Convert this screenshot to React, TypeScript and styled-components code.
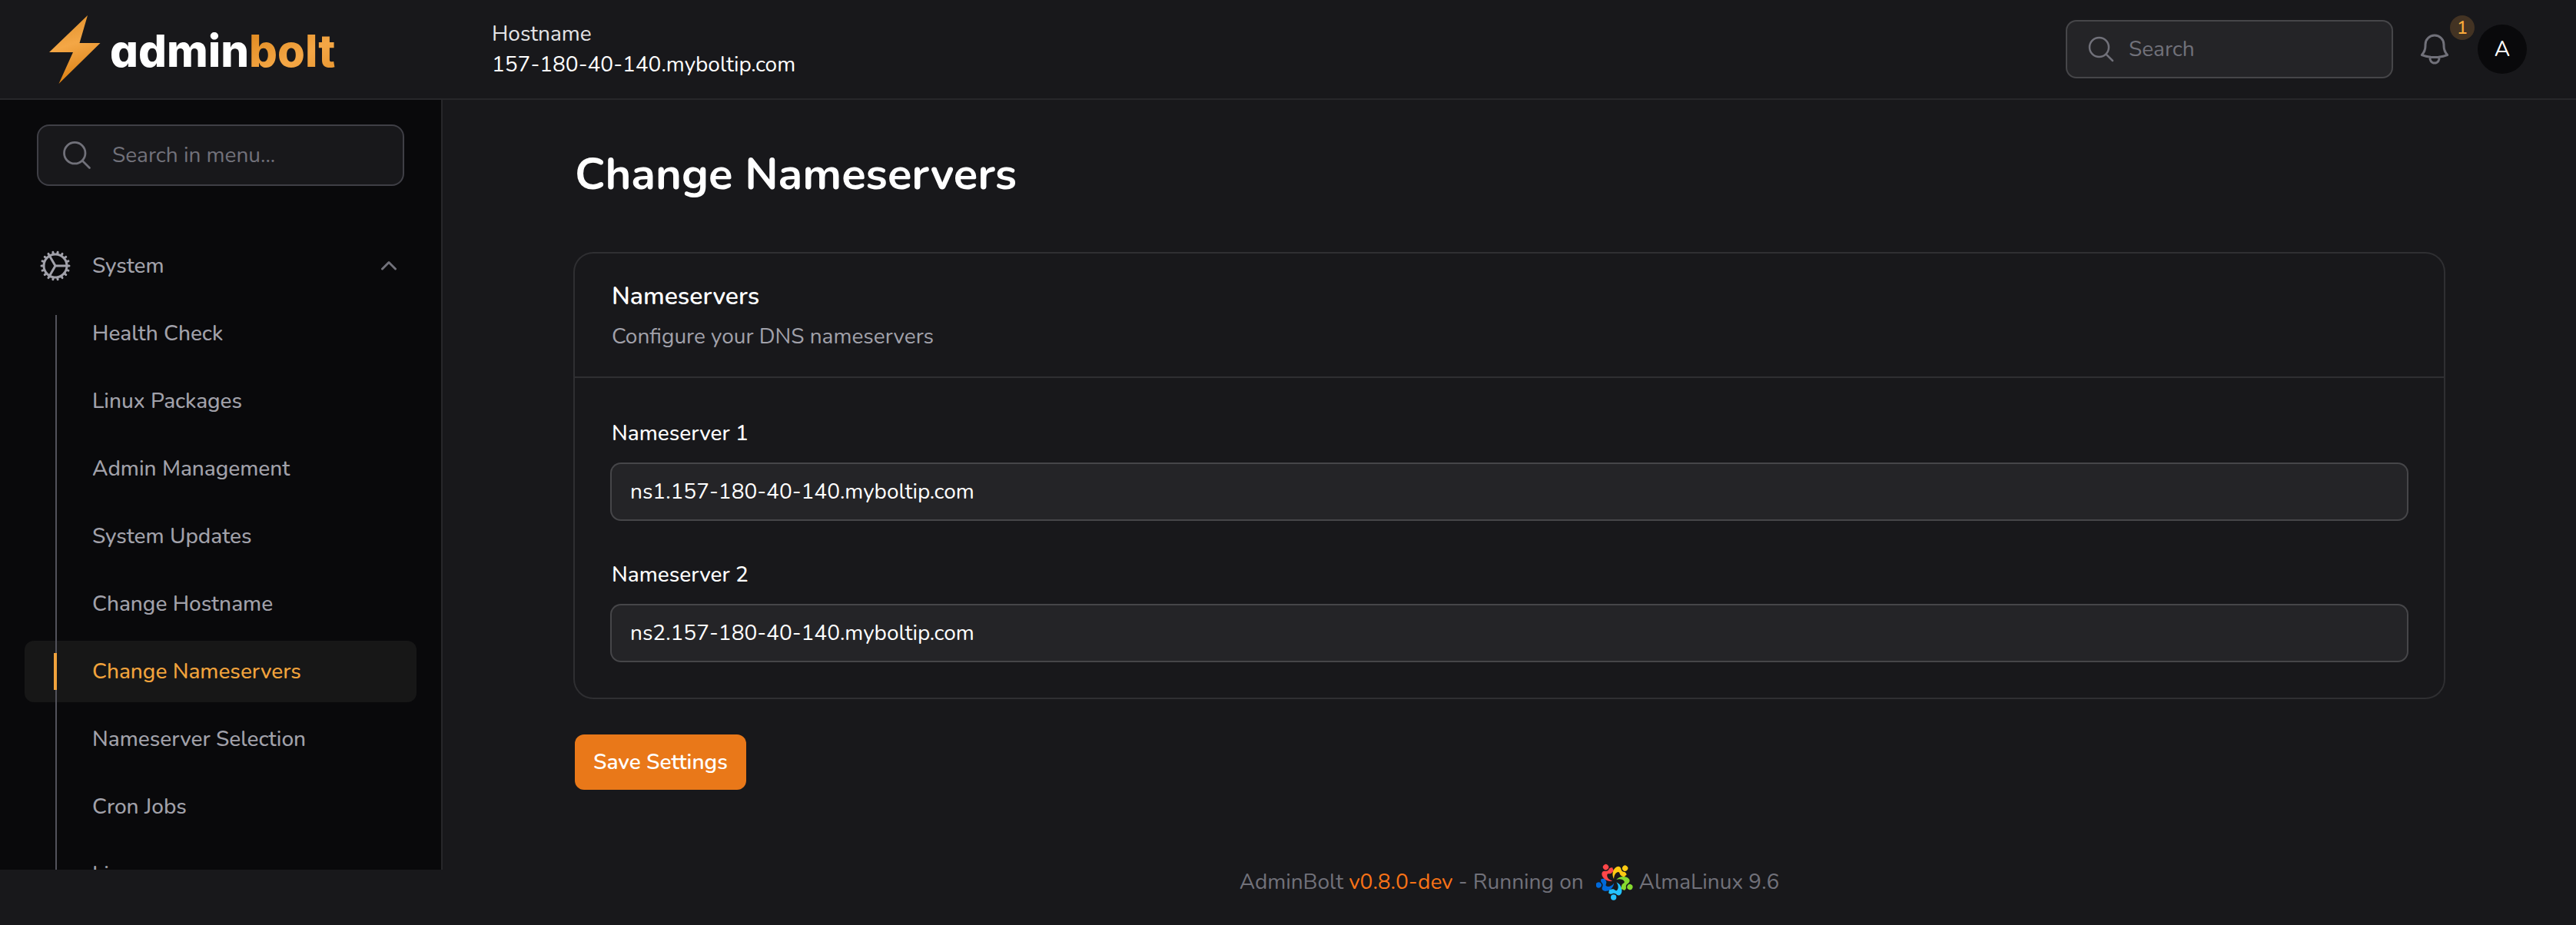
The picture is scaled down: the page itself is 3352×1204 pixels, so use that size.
import React, { useState } from "react";
import styled, { createGlobalStyle, css } from "styled-components";

const color = {
  page: "#18181b",
  sidebar: "#09090b",
  line: "#27272a",
  ring: "#2f2f32",
  fieldRing: "#464649",
  field: "#242427",
  text: "#ffffff",
  soft: "#a1a1aa",
  muted: "#71717a",
  amber: "#f1a33c",
  orange: "#e97819",
};

const GlobalStyle = createGlobalStyle`
  *, *::before, *::after { box-sizing: border-box; }
  body {
    margin: 0;
    background: ${color.page};
    color: ${color.text};
    font-family: Nunito, Lato, "Noto Sans", sans-serif;
    font-size: 28px;
    line-height: 40px;
  }
  button, input { font: inherit; color: inherit; }
  h1, h2, p, ul { margin: 0; padding: 0; }
`;

const Page = styled.div`
  min-height: 100vh;
`;

const Topbar = styled.header`
  display: flex;
  align-items: center;
  height: 130px;
  padding: 0 64px;
  border-bottom: 2px solid ${color.line};
`;

const Brand = styled.a`
  display: flex;
  align-items: center;
  flex: 0 0 576px;
  gap: 12px;
  color: inherit;
  text-decoration: none;
`;

const BrandName = styled.span`
  padding-top: 4px;
  font-family: Inter, sans-serif;
  font-feature-settings: "cv11";
  font-weight: 800;
  font-size: 58px;
  line-height: 64px;
`;

const BrandAccent = styled.span`
  color: transparent;
  background: linear-gradient(155deg, #e08a20 10%, #f4a746 60%, #e8952f 95%);
  background-clip: text;
  -webkit-background-clip: text;
`;

const Host = styled.div`
  flex: 1;
  min-width: 0;
`;

const HostLabel = styled.div`
  color: #e4e4e7;
`;

const Tools = styled.div`
  display: flex;
  align-items: center;
  gap: 32px;
`;

const SearchBox = styled.label<{ $menu?: boolean }>`
  display: flex;
  align-items: center;
  color: ${color.muted};
  ${(p) =>
    p.$menu
      ? css`
          gap: 24px;
          height: 80px;
          margin: 32px 48px 0;
          padding: 0 28px;
          border: 2px solid #3f3f46;
          border-radius: 16px;
          background: ${color.page};
        `
      : css`
          gap: 16px;
          width: 422px;
          height: 72px;
          padding: 0 24px;
          border-radius: 12px;
          background: ${color.field};
          box-shadow: 0 0 0 2px ${color.fieldRing};
        `}
  svg {
    flex: none;
  }
`;

const SearchInput = styled.input`
  flex: 1;
  min-width: 0;
  padding: 0;
  border: 0;
  outline: 0;
  background: none;
  color: ${color.text};
  &::placeholder {
    color: ${color.muted};
    opacity: 1;
  }
`;

const BellButton = styled.button`
  position: relative;
  display: flex;
  padding: 0;
  border: 0;
  background: none;
  color: ${color.muted};
`;

const Badge = styled.span`
  position: absolute;
  top: -20px;
  right: -28px;
  width: 32px;
  height: 32px;
  border-radius: 16px;
  background: #433323;
  color: #fbab3b;
  font-size: 24px;
  line-height: 32px;
  font-weight: 500;
  text-align: center;
`;

const Avatar = styled.button`
  width: 64px;
  height: 64px;
  padding: 0;
  border: 0;
  border-radius: 50%;
  background: ${color.sidebar};
`;

const Body = styled.div`
  display: flex;
  align-items: flex-start;
`;

const Sidebar = styled.aside`
  flex: 0 0 576px;
  height: calc(100vh - 202px);
  overflow: hidden;
  background: ${color.sidebar};
  border-right: 2px solid ${color.line};
`;

const Nav = styled.nav`
  display: flex;
  flex-direction: column;
  gap: 8px;
  padding: 64px 32px;
  color: ${color.soft};
  font-weight: 500;
`;

const GroupToggle = styled.button`
  display: flex;
  align-items: center;
  gap: 24px;
  height: 80px;
  padding: 0 16px;
  border: 0;
  background: none;
  text-align: left;
  span {
    flex: 1;
  }
`;

const NavList = styled.ul`
  position: relative;
  display: flex;
  flex-direction: column;
  gap: 8px;
  list-style: none;
  &::after {
    content: "";
    position: absolute;
    top: 16px;
    bottom: 0;
    left: 40px;
    width: 2px;
    background: #52525b;
  }
`;

const NavLink = styled.a<{ $active?: boolean }>`
  display: flex;
  align-items: center;
  height: 80px;
  padding: 0 16px 0 88px;
  border-radius: 12px;
  color: inherit;
  text-decoration: none;
  ${(p) =>
    p.$active &&
    css`
      position: relative;
      color: ${color.amber};
      background: #171717;
      &::before {
        content: "";
        position: absolute;
        z-index: 1;
        top: 16px;
        bottom: 16px;
        left: 38px;
        width: 4px;
        background: ${color.amber};
      }
    `}
`;

const Main = styled.main`
  flex: 1;
  min-width: 0;
  max-width: 2560px;
  margin: 0 auto;
  padding: 60px 64px 0;
`;

const Title = styled.h1`
  font-size: 58px;
  line-height: 74px;
  font-weight: 700;
`;

const Form = styled.form`
  display: flex;
  flex-direction: column;
  align-items: flex-start;
  gap: 48px;
  margin-top: 66px;
`;

const Card = styled.section`
  align-self: stretch;
  border-radius: 24px;
  box-shadow: 0 0 0 2px ${color.ring};
`;

const CardHeader = styled.header`
  display: flex;
  flex-direction: column;
  gap: 4px;
  padding: 32px 48px 28px;
  border-bottom: 2px solid ${color.ring};
  line-height: 48px;
`;

const CardTitle = styled.h2`
  font-size: 32px;
  font-weight: 600;
`;

const CardText = styled.p`
  color: ${color.soft};
`;

const Fields = styled.div`
  display: flex;
  flex-direction: column;
  gap: 48px;
  padding: 48px;
`;

const Field = styled.div`
  display: flex;
  flex-direction: column;
  gap: 16px;
`;

const FieldLabel = styled.label`
  line-height: 48px;
  font-weight: 500;
`;

const TextInput = styled.input`
  width: 100%;
  height: 72px;
  padding: 0 24px;
  border: 0;
  border-radius: 12px;
  outline: 0;
  background: ${color.field};
  box-shadow: 0 0 0 2px ${color.fieldRing};
`;

const SaveButton = styled.button`
  height: 72px;
  padding: 0 24px;
  border: 0;
  border-radius: 12px;
  background: ${color.orange};
  font-weight: 600;
`;

const Footer = styled.footer`
  display: flex;
  align-items: center;
  justify-content: center;
  gap: 8px;
  padding: 96px 0 32px;
  color: ${color.muted};
  svg {
    margin-left: 8px;
  }
`;

const Version = styled.span`
  color: #f97316;
`;

const HeroIcon = ({ d, size }: { d: string; size: number }) => (
  <svg
    width={size}
    height={size}
    viewBox="0 0 24 24"
    fill="none"
    stroke="currentColor"
    strokeWidth="1.5"
    strokeLinecap="round"
    strokeLinejoin="round"
    aria-hidden="true"
  >
    <path d={d} />
  </svg>
);

const paths = {
  search: "m21 21-5.197-5.197m0 0A7.5 7.5 0 1 0 5.196 5.196a7.5 7.5 0 0 0 10.607 10.607Z",
  bell: "M14.857 17.082a23.848 23.848 0 0 0 5.454-1.31A8.967 8.967 0 0 1 18 9.75V9A6 6 0 0 0 6 9v.75a8.967 8.967 0 0 1-2.312 6.022c1.733.64 3.56 1.085 5.455 1.31m5.714 0a24.255 24.255 0 0 1-5.714 0m5.714 0a3 3 0 1 1-5.714 0",
  cog: "M4.5 12a7.5 7.5 0 0 0 15 0m-15 0a7.5 7.5 0 1 1 15 0m-15 0H3m16.5 0H21m-1.5 0H12m-8.457 3.077 1.41-.513m14.095-5.13 1.41-.513M5.106 17.785l1.15-.964m11.49-9.642 1.149-.964M7.501 19.795l.75-1.3m7.5-12.99.75-1.3m-6.063 16.658.26-1.477m2.605-14.772.26-1.477m0 17.726-.26-1.477M10.698 4.614l-.26-1.477M16.5 19.794l-.75-1.299M7.5 4.205 12 12m6.894 5.785-1.149-.964M6.256 7.178l-1.15-.964m15.352 8.864-1.41-.513M4.954 9.435l-1.41-.514M12.002 12l-3.75 6.495",
};

const BoltMark = () => (
  <svg width="67" height="89" viewBox="0 0 67 89" aria-hidden="true">
    <defs>
      <linearGradient id="bolt" x1="0.2" y1="0" x2="0.45" y2="1">
        <stop offset="0" stopColor="#e08f2a" />
        <stop offset="0.45" stopColor="#f4a746" />
        <stop offset="0.7" stopColor="#e8952f" />
        <stop offset="1" stopColor="#d97c0c" />
      </linearGradient>
    </defs>
    <path d="M50 0 39.500 36H66.500L12.500 89 31 48H0Z" fill="url(#bolt)" />
  </svg>
);

const Chevron = ({ open }: { open: boolean }) => (
  <svg
    width="40"
    height="40"
    viewBox="0 0 20 20"
    fill="none"
    stroke={color.muted}
    strokeWidth="1.5"
    strokeLinecap="round"
    strokeLinejoin="round"
    aria-hidden="true"
  >
    <path d={open ? "m5.750 12 4.250-4.250L14.250 12" : "m5.750 8 4.250 4.250L14.250 8"} />
  </svg>
);

const almaColors = ["#24c2ff", "#0069da", "#ff4649", "#ffcb12", "#86da2f"];

const AlmaLogo = () => (
  <svg width="48" height="48" viewBox="-72 -68 144 144" role="img" aria-label="AlmaLinux">
    {almaColors.map((fill, i) => (
      <g key={fill} fill={fill} transform={`rotate(${i * 72})`}>
        <circle cx="-4" cy="64" r="11" />
        <path d="M7 5C21 11 30 26 28 42C26 54 17 60 9 54C4 49-2 47-7 49C-13 53-20 52-24 46C-21 44-23 37-20 32C-15 35-11 30-5 32C1 34 4 40 9 37C17 30 15 16 7 5Z" />
      </g>
    ))}
  </svg>
);

const links = [
  "Health Check",
  "Linux Packages",
  "Admin Management",
  "System Updates",
  "Change Hostname",
  "Change Nameservers",
  "Nameserver Selection",
  "Cron Jobs",
  "License",
];

export default function App() {
  const [open, setOpen] = useState(true);
  const [servers, setServers] = useState([
    "ns1.157-180-40-140.myboltip.com",
    "ns2.157-180-40-140.myboltip.com",
  ]);

  return (
    <Page>
      <GlobalStyle />
      <Topbar>
        <Brand href="#">
          <BoltMark />
          <BrandName>
            admin<BrandAccent>bolt</BrandAccent>
          </BrandName>
        </Brand>
        <Host>
          <HostLabel>Hostname</HostLabel>
          <div>157-180-40-140.myboltip.com</div>
        </Host>
        <Tools>
          <SearchBox>
            <HeroIcon d={paths.search} size={40} />
            <SearchInput type="search" placeholder="Search" aria-label="Search" />
          </SearchBox>
          <BellButton type="button" aria-label="Notifications">
            <HeroIcon d={paths.bell} size={48} />
            <Badge>1</Badge>
          </BellButton>
          <Avatar type="button">A</Avatar>
        </Tools>
      </Topbar>
      <Body>
        <Sidebar>
          <SearchBox $menu>
            <HeroIcon d={paths.search} size={44} />
            <SearchInput type="search" placeholder="Search in menu..." aria-label="Search in menu" />
          </SearchBox>
          <Nav>
            <GroupToggle type="button" aria-expanded={open} onClick={() => setOpen(!open)}>
              <HeroIcon d={paths.cog} size={48} />
              <span>System</span>
              <Chevron open={open} />
            </GroupToggle>
            {open && (
              <NavList>
                {links.map((name) => (
                  <li key={name}>
                    <NavLink href="#" $active={name === "Change Nameservers"}>
                      {name}
                    </NavLink>
                  </li>
                ))}
              </NavList>
            )}
          </Nav>
        </Sidebar>
        <Main>
          <Title>Change Nameservers</Title>
          <Form onSubmit={(e) => e.preventDefault()}>
            <Card>
              <CardHeader>
                <CardTitle>Nameservers</CardTitle>
                <CardText>Configure your DNS nameservers</CardText>
              </CardHeader>
              <Fields>
                {servers.map((value, i) => (
                  <Field key={i}>
                    <FieldLabel htmlFor={`ns${i}`}>Nameserver {i + 1}</FieldLabel>
                    <TextInput
                      id={`ns${i}`}
                      value={value}
                      onChange={(e) =>
                        setServers(servers.map((s, j) => (j === i ? e.target.value : s)))
                      }
                    />
                  </Field>
                ))}
              </Fields>
            </Card>
            <SaveButton type="submit">Save Settings</SaveButton>
          </Form>
          <Footer>
            <span>
              AdminBolt <Version>v0.8.0-dev</Version> - Running on
            </span>
            <AlmaLogo />
            <span>AlmaLinux 9.6</span>
          </Footer>
        </Main>
      </Body>
    </Page>
  );
}
